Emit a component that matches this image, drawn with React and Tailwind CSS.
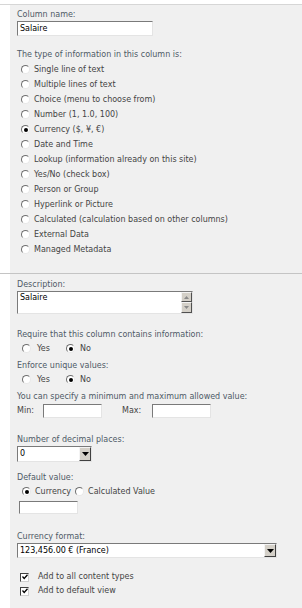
import React from "react";

const types = [
  "Single line of text",
  "Multiple lines of text",
  "Choice (menu to choose from)",
  "Number (1, 1.0, 100)",
  "Currency ($, ¥, €)",
  "Date and Time",
  "Lookup (information already on this site)",
  "Yes/No (check box)",
  "Person or Group",
  "Hyperlink or Picture",
  "Calculated (calculation based on other columns)",
  "External Data",
  "Managed Metadata",
];

function Radio({ checked }) {
  return (
    <span className="relative inline-flex items-center justify-center w-[9px] h-[9px] rounded-full border border-t-[#6f6f6f] border-l-[#6f6f6f] border-b-[#e8e8e8] border-r-[#e8e8e8] bg-white shrink-0">
      {checked && <span className="w-[4px] h-[4px] rounded-full bg-black" />}
    </span>
  );
}

function Check() {
  return (
    <span className="inline-flex items-center justify-center w-[9px] h-[9px] border border-t-[#404040] border-l-[#404040] border-b-[#d0d0d0] border-r-[#d0d0d0] bg-white shrink-0">
      <svg width="6" height="6" viewBox="0 0 6 6">
        <path d="M0.5 2.5 L2.2 4.5 L5.5 0.8" stroke="#000" strokeWidth="1.3" fill="none" />
      </svg>
    </span>
  );
}

function Label({ children, className = "" }) {
  return <div className={`h-[12px] flex items-center text-[#4e5a66] ${className}`}>{children}</div>;
}

function DropBtn() {
  return (
    <span className="w-[12px] h-full flex items-center justify-center bg-[#d4d0c8] border border-t-[#f4f4f4] border-l-[#f4f4f4] border-b-[#404040] border-r-[#404040] shrink-0">
      <svg width="7" height="4" viewBox="0 0 7 4">
        <path d="M0 0 H7 L3.5 4 Z" fill="#000" />
      </svg>
    </span>
  );
}

const inset = "border border-t-[#7a7a7a] border-l-[#7a7a7a] border-b-[#e4e4e4] border-r-[#e4e4e4] bg-white";

export default function App() {
  return (
    <div className="w-[302px] h-[608px] bg-white overflow-hidden text-[8px] leading-none text-[#444]" style={{ fontFamily: '"DejaVu Sans", Verdana, sans-serif' }}>
      <div className="h-[4px]" />
      <div className="border-t border-[#d6d6d6]">
        <div className="ml-[10px] bg-[#f0f0f0] h-[268px] pl-[7px] pt-[4px]">
          <Label>Column name:</Label>
          <div className={`w-[136px] h-[15px] ${inset} flex items-center px-[2px] text-black`}>Salaire</div>
          <Label className="mt-[13px]">The type of information in this column is:</Label>
          <div className="mt-[1px] flex flex-col">
            {types.map((t, i) => (
              <div key={t} className="h-[15px] flex items-center gap-[4px] pl-[4px]">
                <Radio checked={i === 4} />
                <span>{t}</span>
              </div>
            ))}
          </div>
        </div>
      </div>
      <div className="border-t border-[#c4c4c4]">
        <div className="ml-[10px] bg-[#f0f0f0] h-[340px] pl-[7px] pt-[5px]">
          <Label>Description:</Label>
          <div className={`w-[176px] h-[23px] ${inset} flex text-black`}>
            <div className="flex-1 px-[2px] pt-[2px]">Salaire</div>
            <div className="w-[11px] flex flex-col">
              <span className="h-[10px] flex items-center justify-center bg-[#d4d0c8] border border-t-[#f4f4f4] border-l-[#f4f4f4] border-b-[#505050] border-r-[#505050]">
                <svg width="5" height="3" viewBox="0 0 5 3"><path d="M0 3 H5 L2.5 0 Z" fill="#8a8a8a" /></svg>
              </span>
              <span className="h-[11px] flex items-center justify-center bg-[#d4d0c8] border border-t-[#f4f4f4] border-l-[#f4f4f4] border-b-[#505050] border-r-[#505050]">
                <svg width="5" height="3" viewBox="0 0 5 3"><path d="M0 0 H5 L2.5 3 Z" fill="#8a8a8a" /></svg>
              </span>
            </div>
          </div>
          <Label className="mt-[15px]">Require that this column contains information:</Label>
          <div className="h-[15px] flex items-center pl-[5px]">
            <Radio />
            <span className="ml-[6px] w-[29px]">Yes</span>
            <Radio checked />
            <span className="ml-[5px]">No</span>
          </div>
          <Label className="mt-[4px]">Enforce unique values:</Label>
          <div className="h-[15px] flex items-center pl-[5px]">
            <Radio />
            <span className="ml-[6px] w-[29px]">Yes</span>
            <Radio checked />
            <span className="ml-[5px]">No</span>
          </div>
          <Label className="mt-[4px]">You can specify a minimum and maximum allowed value:</Label>
          <div className="h-[15px] flex items-center">
            <span className="w-[26px]">Min:</span>
            <div className={`w-[59px] h-[14px] ${inset}`} />
            <span className="ml-[20px] w-[30px]">Max:</span>
            <div className={`w-[59px] h-[14px] ${inset}`} />
          </div>
          <Label className="mt-[16px]">Number of decimal places:</Label>
          <div className={`w-[75px] h-[16px] ${inset} flex items-center text-black`}>
            <span className="flex-1 px-[2px]">0</span>
            <DropBtn />
          </div>
          <Label className="mt-[10px]">Default value:</Label>
          <div className="h-[15px] flex items-center pl-[5px]">
            <Radio checked />
            <span className="ml-[4px] mr-[4px]">Currency</span>
            <Radio />
            <span className="ml-[4px]">Calculated Value</span>
          </div>
          <div className={`ml-[2px] mt-[2px] w-[59px] h-[13px] ${inset}`} />
          <Label className="mt-[17px]">Currency format:</Label>
          <div className={`w-[260px] h-[15px] ${inset} flex items-center text-black`}>
            <span className="flex-1 px-[2px]">123,456.00 € (France)</span>
            <DropBtn />
          </div>
          <div className="mt-[12px] h-[14px] flex items-center pl-[3px]">
            <Check />
            <span className="ml-[9px]">Add to all content types</span>
          </div>
          <div className="h-[14px] flex items-center pl-[3px]">
            <Check />
            <span className="ml-[9px]">Add to default view</span>
          </div>
        </div>
      </div>
    </div>
  );
}
